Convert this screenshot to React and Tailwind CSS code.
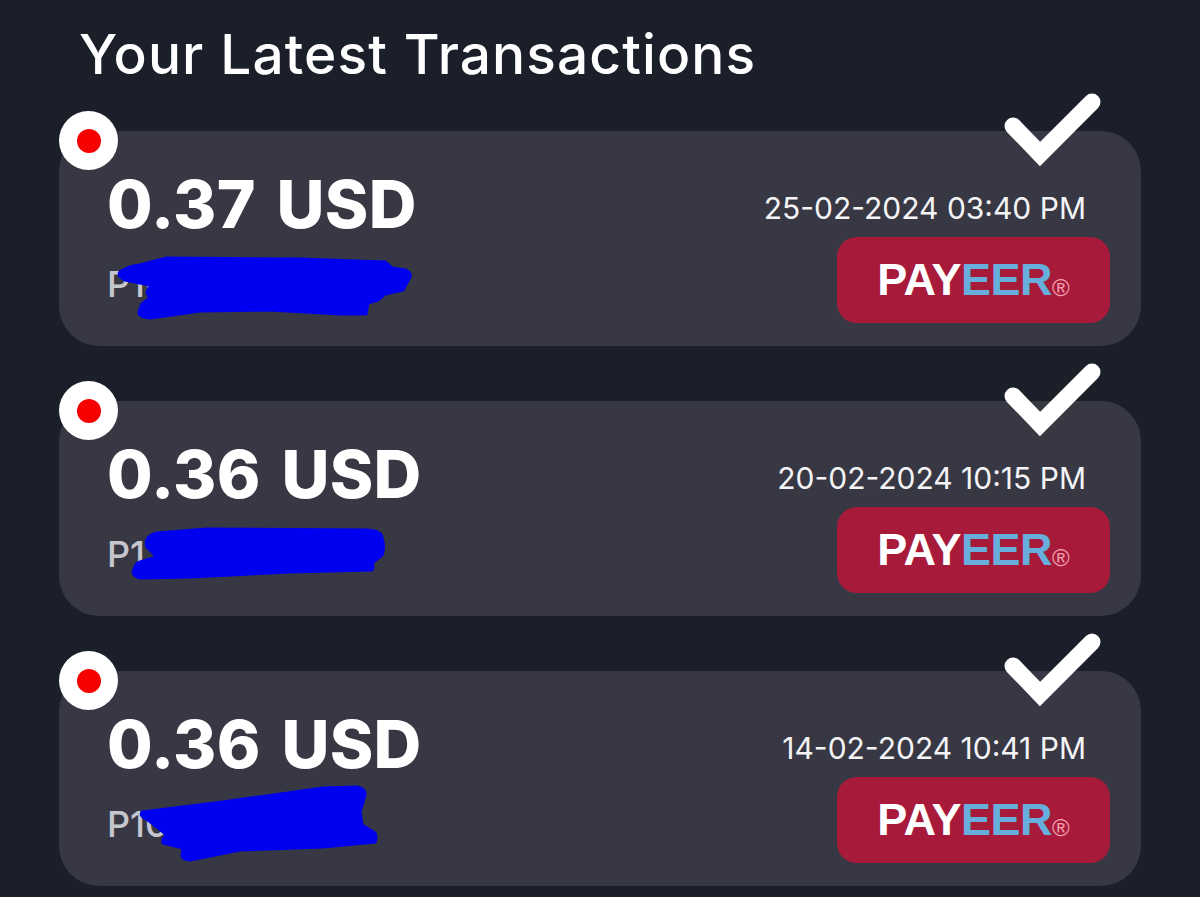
const transactions = [
  {
    amount: '0.37 USD',
    account: 'P10',
    date: '25-02-2024 03:40 PM',
    scribble: 'M61 141 Q70 135 81 134 L108 127 L241 128 L326 131 L333 137 L346 139 Q353 142 351 146 L344 159 L326 163 L319 169 L309 172 L307 183 L281 183 L211 179 L141 180 L91 187 Q79 186 80 181 L83 173 L91 167 L88 162 L91 154 L66 149 Q58 145 61 141 Z',
  },
  {
    amount: '0.36 USD',
    account: 'P1',
    date: '20-02-2024 10:15 PM',
    scribble: 'M89 137 Q92 133 98 132 L148 128 L308 129 Q323 130 323 137 Q326 146 323 154 L313 162 Q315 166 313 169 L231 171 L131 176 L81 177 Q72 174 75 169 Q76 163 81 161 L98 156 L88 146 Q86 141 89 137 Z',
  },
  {
    amount: '0.36 USD',
    account: 'P10',
    date: '14-02-2024 10:41 PM',
    scribble: 'M83 141 L164 131 L264 117 L298 116 Q307 118 306 124 L301 141 L303 154 L316 162 Q318 167 316 171 L264 176 L181 179 L131 189 Q122 188 123 184 L124 177 L104 172 Q103 167 108 164 L89 149 Q80 145 83 141 Z',
  },
];

const Row = ({ tx }) => {
  return (
    <div className="relative h-[215px] rounded-[40px] bg-[#383844] flex justify-between pl-12 pr-[31px]">
      <div className="absolute -top-5 left-0 w-[59px] h-[59px] rounded-full bg-white flex items-center justify-center">
        <div className="w-6 h-6 rounded-full bg-[#f60000]" />
      </div>
      <svg className="absolute -top-9 right-[38px] w-[98px] h-[74px] overflow-visible" viewBox="0 0 98 74" fill="none">
        <path d="M8 31 L35 59 L87 7" stroke="#ffffff" strokeWidth="17" strokeLinejoin="miter" strokeLinecap="round" />
      </svg>

      <div className="pt-[34px]">
        <div className="text-[66px] leading-[78px] font-extrabold text-white tracking-[0.3px] [word-spacing:6px]">{tx.amount}</div>
        <div className="mt-[21px] text-[36px] leading-10 font-medium text-[#c6c6ce]">{tx.account}</div>
      </div>

      <div className="flex flex-col items-end pt-[59px]">
        <div className="mr-6 text-[30px] leading-9 text-[#f4f4f6]">{tx.date}</div>
        <div className="mt-[11px] w-[273px] h-[86px] rounded-[20px] bg-[#a81a3a] flex items-center justify-center pb-px">
          <span className="font-['Liberation_Sans',sans-serif] text-[45px] font-bold tracking-[-0.5px] text-white">PAY</span>
          <span className="font-['Liberation_Sans',sans-serif] text-[45px] font-bold tracking-[-0.5px] text-[#68aedd]">EER</span>
          <span className="font-['Liberation_Sans',sans-serif] text-[24px] mt-4 text-[#f3a0ae]">®</span>
        </div>
      </div>

      <svg className="absolute inset-0 w-full h-full pointer-events-none" viewBox="0 0 1082 215" fill="none">
        <path d={tx.scribble} fill="#0000f0" stroke="#0000f0" strokeWidth="3" strokeLinejoin="round" />
      </svg>
    </div>
  );
};

export default function App() {
  return (
    <div className="h-[897px] overflow-hidden bg-[#1a1f2a] px-[59px] font-['Inter',sans-serif]">
      <h1 className="pt-[22px] pl-5 text-[55px] leading-[64px] font-medium text-white tracking-[1.1px]">
        Your Latest Transactions
      </h1>
      <div className="mt-[45px] flex flex-col gap-[55px]">
        {transactions.map((tx, i) => (
          <Row key={i} tx={tx} />
        ))}
      </div>
    </div>
  );
}
